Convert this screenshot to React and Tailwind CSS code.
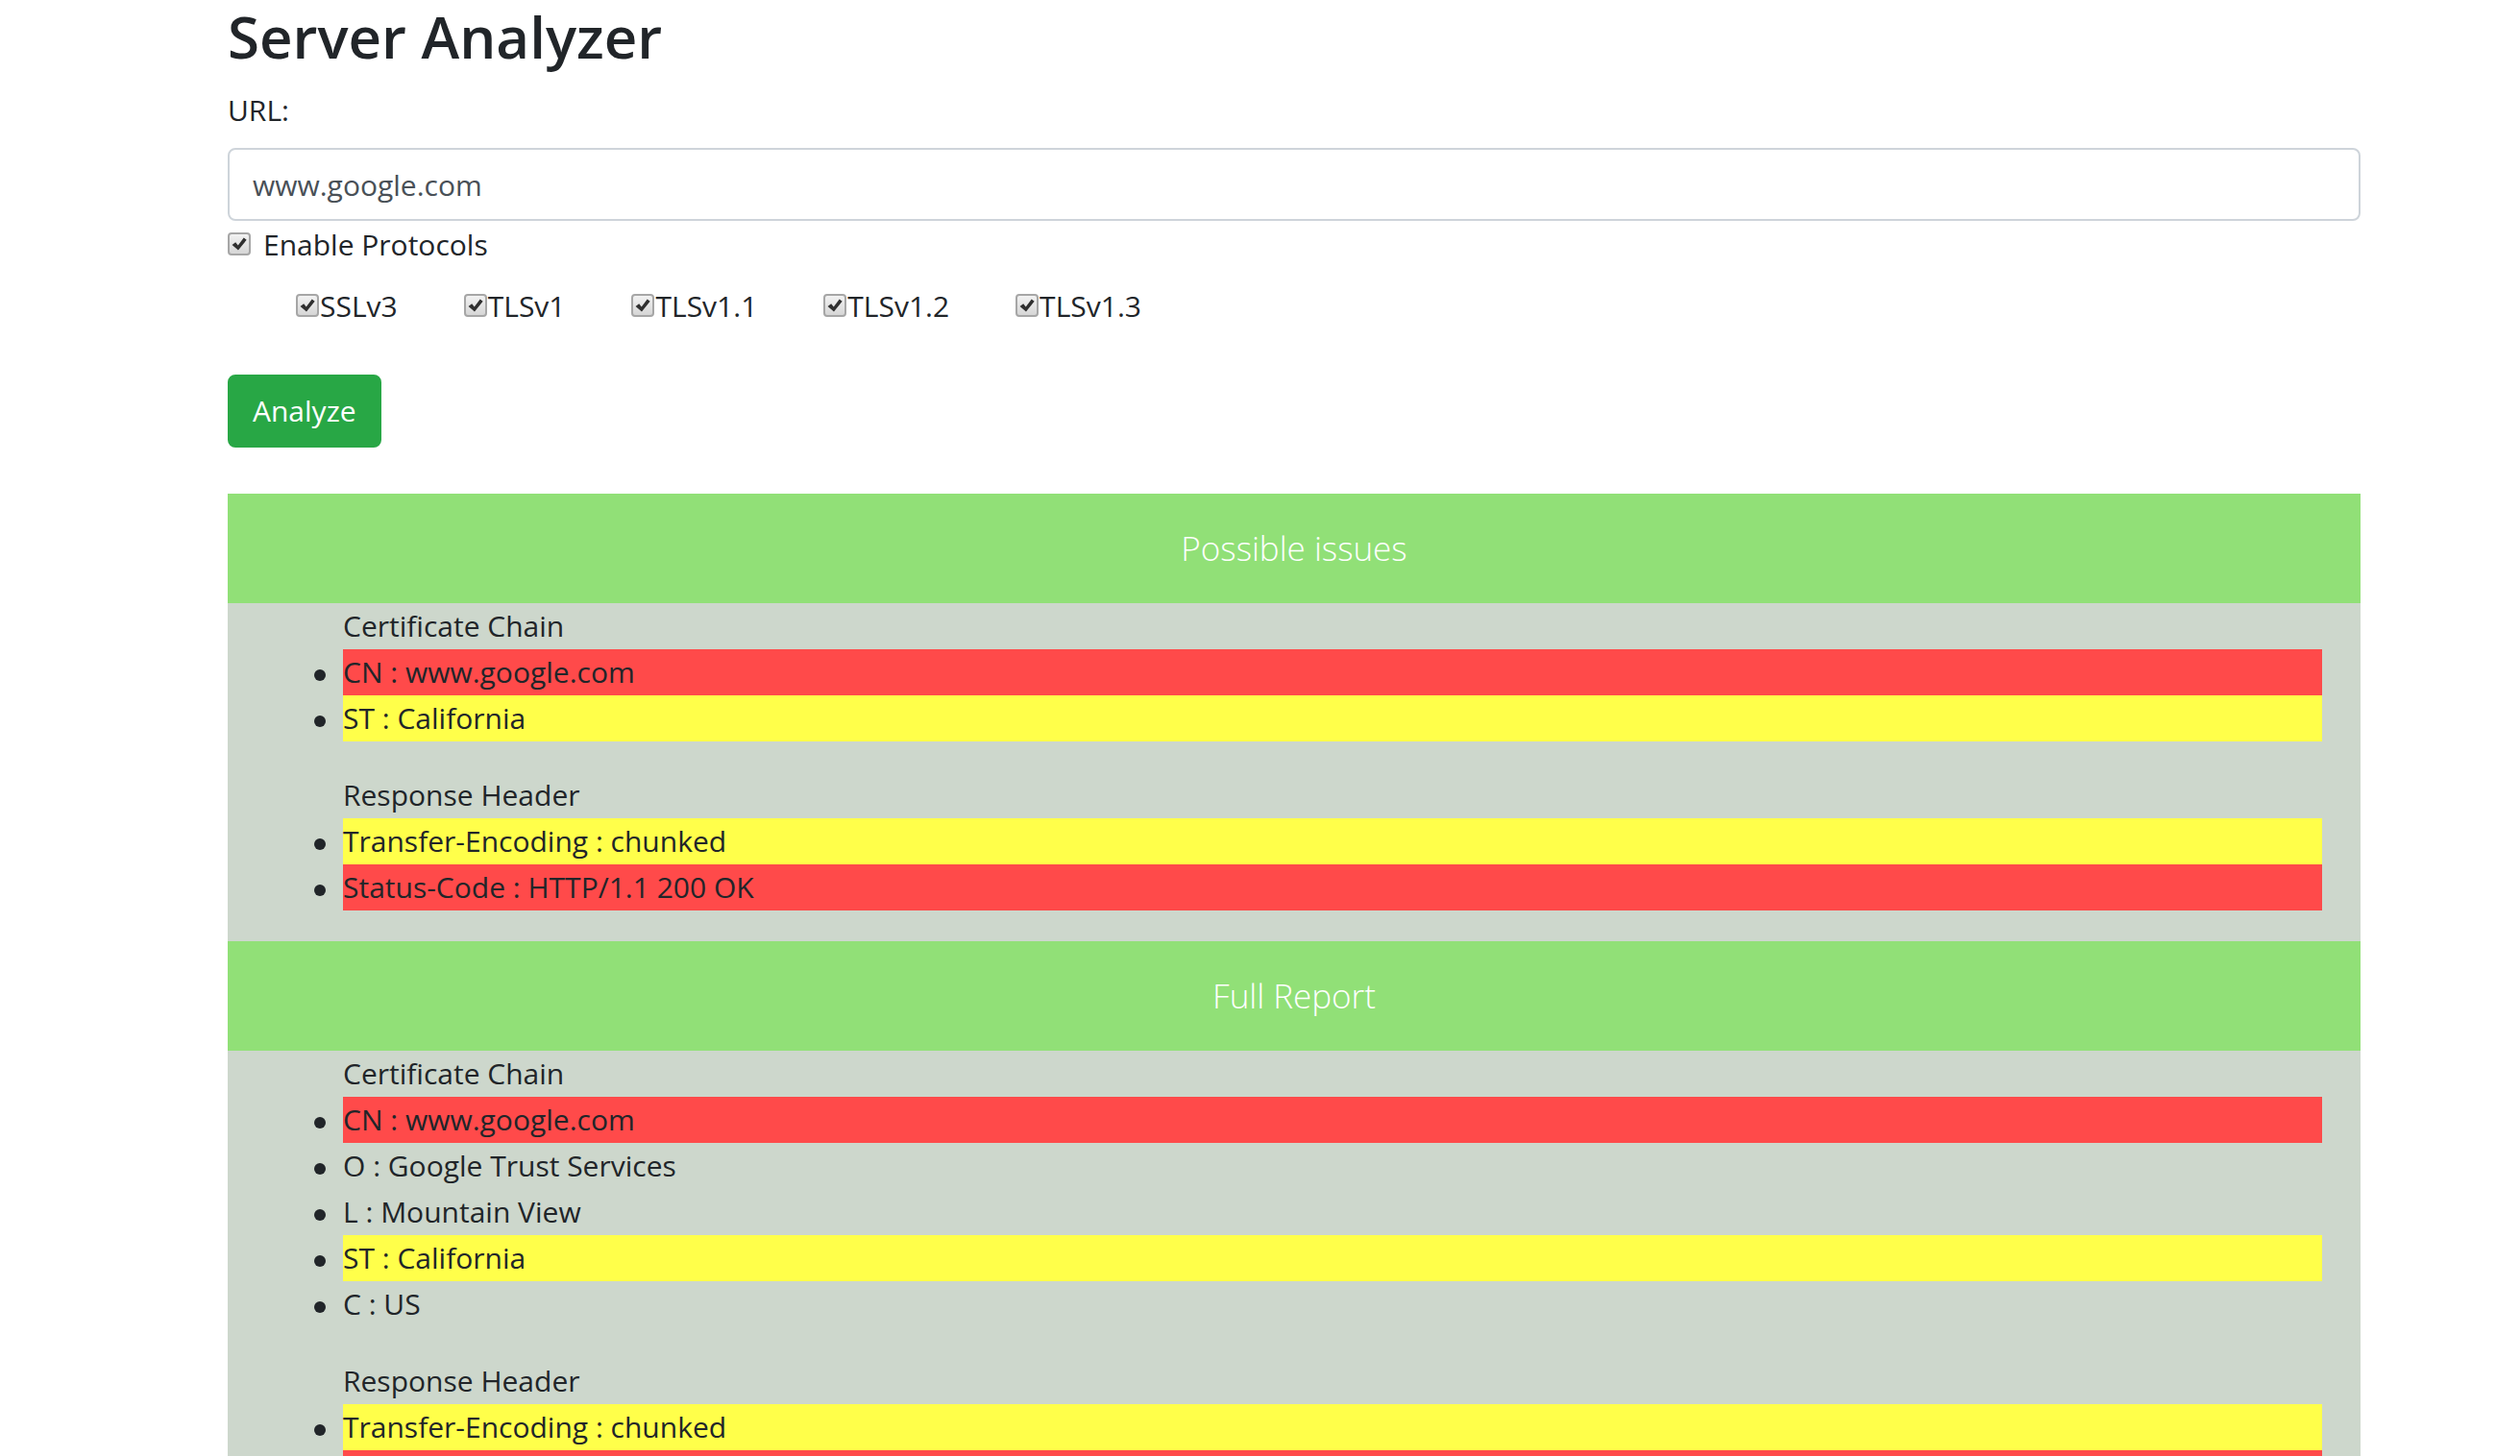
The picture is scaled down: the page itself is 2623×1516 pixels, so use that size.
import { useState } from 'react';

const ROW_BG = {
  red: 'bg-[#ff4a4a]',
  yellow: 'bg-[#ffff4a]',
};

const issues = [
  {
    title: 'Certificate Chain',
    items: [
      ['CN : www.google.com', 'red'],
      ['ST : California', 'yellow'],
    ],
  },
  {
    title: 'Response Header',
    items: [
      ['Transfer-Encoding : chunked', 'yellow'],
      ['Status-Code : HTTP/1.1 200 OK', 'red'],
    ],
  },
];

const fullReport = [
  {
    title: 'Certificate Chain',
    items: [
      ['CN : www.google.com', 'red'],
      ['O : Google Trust Services'],
      ['L : Mountain View'],
      ['ST : California', 'yellow'],
      ['C : US'],
    ],
  },
  {
    title: 'Response Header',
    items: [
      ['Transfer-Encoding : chunked', 'yellow'],
      ['Status-Code : HTTP/1.1 200 OK', 'red'],
      ['Server : gws'],
    ],
  },
];

const protocols = ['SSLv3', 'TLSv1', 'TLSv1.1', 'TLSv1.2', 'TLSv1.3'];

function CheckBox() {
  return (
    <span className="inline-flex size-[24px] shrink-0 items-center justify-center rounded-[4px] border-2 border-[#a6a6a6] bg-gradient-to-b from-[#f2f2f2] to-[#d6d6d6]">
      <svg viewBox="0 0 16 16" className="size-[18px]">
        <path d="M1.4 8.8 L4.6 6.4 L6.9 9.3 L12.2 2.2 L14.8 4.3 L7.1 13.8 Z" fill="#2f2f2f" />
      </svg>
    </span>
  );
}

function Section({ heading, groups }) {
  return (
    <section>
      <div className="flex h-[114px] items-center justify-center bg-[#91e077] text-[35px] font-light text-white">
        {heading}
      </div>
      <div className="flow-root bg-[#cdd7cc] px-[40px]">
        {groups.map((group) => (
          <ul key={group.title} className="mb-[32px] pl-[80px] leading-[48px]">
            <div>{group.title}</div>
            {group.items.map(([text, level]) => (
              <li
                key={text}
                className={`relative before:absolute before:-left-[30px] before:top-[21px] before:size-[12px] before:rounded-full before:bg-[#212529] before:content-[''] ${
                  level ? ROW_BG[level] : ''
                }`}
              >
                {text}
              </li>
            ))}
          </ul>
        ))}
      </div>
    </section>
  );
}

export default function App() {
  const [url, setUrl] = useState('www.google.com');

  return (
    <div className="h-screen w-full overflow-hidden bg-white font-['Open_Sans','Liberation_Sans',sans-serif] text-[30px] text-[#212529]">
      <div className="ml-[237px] w-[2220px]">
        <h1 className="mb-[14px] text-[60px] font-semibold leading-[77px]">Server Analyzer</h1>
        <label htmlFor="url" className="mb-[15px] block leading-[48px]">
          URL:
        </label>
        <input
          id="url"
          value={url}
          onChange={(e) => setUrl(e.target.value)}
          className="block h-[76px] w-full rounded-lg border-2 border-[#ced4da] px-[24px] py-[12px] leading-[48px] text-[#495057] outline-none"
        />
        <div className="flex h-[48px] items-center">
          <CheckBox />
          <span className="ml-[13px]">Enable Protocols</span>
        </div>
        <div className="mt-[16px] flex h-[48px] items-center pl-[71px]">
          {protocols.map((p) => (
            <label key={p} className="mr-[69px] flex items-center">
              <CheckBox />
              <span className="ml-[1px]">{p}</span>
            </label>
          ))}
        </div>
        <button
          type="button"
          className="mt-[48px] block h-[76px] rounded-lg border-2 border-[#28a745] bg-[#28a745] px-[24px] leading-[48px] text-white"
        >
          Analyze
        </button>
        <div className="mt-[48px]">
          <Section heading="Possible issues" groups={issues} />
          <Section heading="Full Report" groups={fullReport} />
        </div>
      </div>
    </div>
  );
}
